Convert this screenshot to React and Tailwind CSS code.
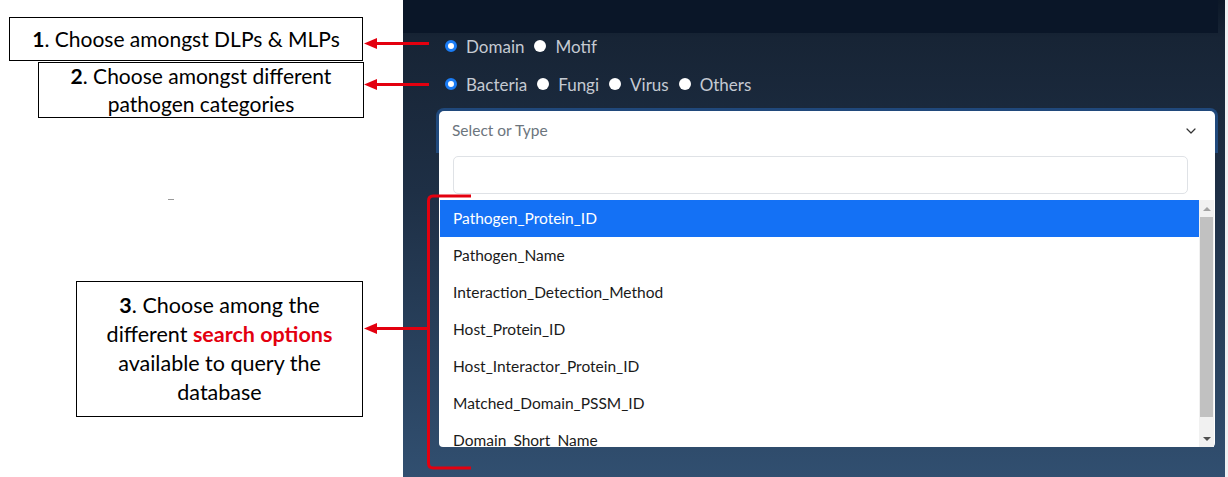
import { ChevronDown } from 'lucide-react';

const OPTIONS = [
  'Pathogen_Protein_ID',
  'Pathogen_Name',
  'Interaction_Detection_Method',
  'Host_Protein_ID',
  'Host_Interactor_Protein_ID',
  'Matched_Domain_PSSM_ID',
  'Domain_Short_Name',
];

/**
 * Radio button with label, styled like the dark search panel
 */
function Radio({ label, checked }) {
  return (
    <label className="flex items-center mr-[10px]">
      {checked ? (
        <span className="w-[12px] h-[12px] rounded-full bg-white border-[3px] border-[#1a7cf5]" />
      ) : (
        <span className="w-[12px] h-[12px] rounded-full bg-white" />
      )}
      <span className="ml-[9px] text-[17px] leading-none text-[#c5cad2]">{label}</span>
    </label>
  );
}

/**
 * Annotation callouts drawn over the page
 */
function Annotations() {
  return (
    <svg
      className="absolute inset-0 pointer-events-none"
      width="1228"
      height="477"
      viewBox="0 0 1228 477"
    >
      <g stroke="#e3000f" strokeWidth="3" fill="none">
        <line x1="374" y1="43.5" x2="429" y2="43.5" />
        <line x1="374" y1="84.5" x2="429" y2="84.5" />
        <line x1="374" y1="328.5" x2="429" y2="328.5" />
        <path d="M471 196 L433 196 Q428.5 196 428.5 201 L428.5 463 Q428.5 468 433 468 L471 468" />
      </g>
      <g fill="#e3000f">
        <polygon points="364,43.5 377,38 377,49" />
        <polygon points="364,84.5 377,79 377,90" />
        <polygon points="364,328.5 377,323 377,334" />
      </g>
    </svg>
  );
}

export default function App() {
  return (
    <div
      className="relative w-[1228px] h-[477px] flex bg-white overflow-hidden"
      style={{ fontFamily: 'Lato, "Open Sans", sans-serif' }}
    >
      {/* Left column with explanation boxes */}
      <div className="w-[403px] flex flex-col">
        <div className="ml-[9px] mt-[17px] w-[354px] h-[44px] border-[1.5px] border-black flex items-center justify-center text-[21px] text-black">
          <span>
            <b>1</b>. Choose amongst DLPs &amp; MLPs
          </span>
        </div>
        <div className="ml-[38px] mt-[1px] w-[326px] h-[56px] border-[1.5px] border-black flex items-center justify-center text-center text-[21px] leading-[28px] text-black">
          <span>
            <b>2</b>. Choose amongst different
            <br />
            pathogen categories
          </span>
        </div>
        <div className="h-[163px] flex items-center pl-[168px]">
          <span className="w-[6px] h-[1px] bg-[#9a9a9a]" />
        </div>
        <div className="ml-[76px] w-[287px] h-[136px] border-[1.5px] border-black flex items-center justify-center text-center text-[21.5px] leading-[29px] text-black">
          <span>
            <b>3</b>. Choose among the
            <br />
            different <b className="text-[#e3000f]">search options</b>
            <br />
            available to query the
            <br />
            database
          </span>
        </div>
      </div>

      {/* Search panel */}
      <div className="w-[822px] h-full flex flex-col bg-[linear-gradient(180deg,#0c1828_0%,#172435_8%,#1e2f45_40%,#314f70_100%)]">
        <div className="h-[33px] mr-[7px] bg-[#0a1628]" />

        <div className="flex flex-col pl-[42px]">
          <div className="mt-[3px] h-[20px] flex items-center">
            <Radio label="Domain" checked />
            <Radio label="Motif" />
          </div>
          <div className="mt-[18px] h-[20px] flex items-center">
            <Radio label="Bacteria" checked />
            <Radio label="Fungi" />
            <Radio label="Virus" />
            <Radio label="Others" />
          </div>
        </div>

        {/* Select with open dropdown */}
        <div className="ml-[36px] mt-[17px] w-[776px] flex flex-col">
          <div className="h-[39px] bg-white rounded-t-[5px] shadow-[0_0_0_3px_rgba(40,110,200,0.45)] flex items-center justify-between pl-[13px] pr-[16px]">
            <span className="text-[15.5px] text-[#6c757d]">Select or Type</span>
            <ChevronDown className="w-[16px] h-[16px] text-[#333]" strokeWidth={1.8} />
          </div>
          <div className="relative bg-white rounded-b-[4px] flex flex-col">
            <div className="pt-[6px] pl-[14px]">
              <div className="w-[735px] h-[38px] border border-[#dfe2e6] rounded-[5px]" />
            </div>
            <div className="mt-[6px] ml-[1px] h-[247px] flex">
              <div className="w-[759px] h-full overflow-hidden flex flex-col">
                {OPTIONS.map((opt, i) => (
                  <div
                    key={opt}
                    className={
                      i === 0
                        ? 'h-[37px] shrink-0 flex items-center pl-[13px] text-[15.5px] bg-[#1471f5] text-white'
                        : 'h-[37px] shrink-0 flex items-center pl-[13px] text-[15.5px] text-[#1a1a1a]'
                    }
                  >
                    {opt}
                  </div>
                ))}
              </div>
              {/* Scrollbar */}
              <div className="w-[15px] h-full bg-[#f1f1f1] flex flex-col items-center">
                <div className="h-[17px] flex items-center justify-center">
                  <span className="w-0 h-0 border-l-[4px] border-r-[4px] border-b-[4px] border-l-transparent border-r-transparent border-b-[#a3a3a3]" />
                </div>
                <div className="w-[13px] h-[200px] bg-[#c1c1c1]" />
                <div className="flex-1" />
                <div className="h-[17px] flex items-center justify-center">
                  <span className="w-0 h-0 border-l-[4px] border-r-[4px] border-t-[4px] border-l-transparent border-r-transparent border-t-[#505050]" />
                </div>
              </div>
            </div>
          </div>
        </div>
      </div>

      <div className="flex-1 bg-[#eef0f2]" />

      <Annotations />
    </div>
  );
}
